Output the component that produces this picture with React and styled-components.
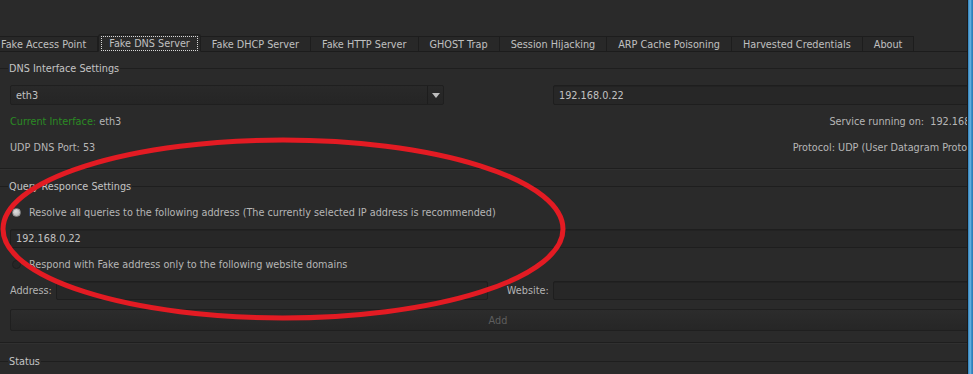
import React from "react";
import styled, { createGlobalStyle } from "styled-components";

const GlobalStyle = createGlobalStyle`
  html, body { margin: 0; padding: 0; background: #2a2a2a; }
  body { font-family: "DejaVu Sans", "Liberation Sans", sans-serif; }
  * { box-sizing: border-box; }
`;

const Screen = styled.div`
  position: relative;
  width: 973px;
  height: 374px;
  display: flex;
  overflow: hidden;
  background: #2a2a2a;
  font-family: "DejaVu Sans", "Liberation Sans", sans-serif;
  font-size: 9.7px;
  color: #b6b6b6;
`;

const Viewport = styled.div`
  width: 967px;
  flex: none;
  overflow: hidden;
`;

const Window = styled.div`
  width: 995px;
  padding-top: 34px;
`;

const TabBar = styled.div`
  display: flex;
  align-items: flex-end;
  height: 18px;
  margin-left: -10px;
  border-bottom: 1px solid #1c1c1c;
`;

const Tab = styled.div`
  flex: none;
  height: ${(p) => (p.$active ? "18px" : "16px")};
  margin-bottom: -1px;
  padding: 0 ${(p) => (p.$active ? "2px" : "11px")};
  display: flex;
  align-items: center;
  justify-content: center;
  background: ${(p) => (p.$active ? "#2a2a2a" : "#282828")};
  border: 1px solid #1d1d1d;
  border-bottom-color: ${(p) => (p.$active ? "#2a2a2a" : "#1c1c1c")};
  border-left-width: ${(p) => (p.$active ? "1px" : "0")};
  border-radius: ${(p) => (p.$active ? "3px 3px 0 0" : "0")};
  color: #c0c0c0;
  white-space: nowrap;
`;

const FocusLabel = styled.span`
  padding: 1px 7px;
  border: 1px dotted #d8d8d8;
  line-height: 11px;
`;

const Pane = styled.div`
  padding-top: 10px;
`;

const Group = styled.section`
  border-bottom: 1px solid #1e1e1e;
  box-shadow: 0 1px 0 #303030;
  padding-bottom: ${(p) => p.$pb || 0}px;
  margin-bottom: ${(p) => p.$mb || 0}px;
`;

const GroupTitle = styled.div`
  display: flex;
  align-items: center;
  height: 12px;
  color: #c4c4c4;
  white-space: nowrap;
  margin-bottom: ${(p) => p.$mb || 0}px;
  &::before {
    content: "";
    width: 8px;
    margin-right: 1px;
    border-top: 1px solid #1e1e1e;
  }
  &::after {
    content: "";
    flex: 1;
    margin-left: 1px;
    border-top: 1px solid #1e1e1e;
  }
`;

const Row = styled.div`
  display: flex;
  align-items: center;
  height: 26px;
  padding-left: ${(p) => (p.$indent ? 29 : 10)}px;
  white-space: nowrap;
`;

const SplitRow = styled(Row)`
  justify-content: space-between;
`;

const InfoText = styled.span`
  margin-right: ${(p) => p.$mr || 0}px;
`;

const Combo = styled.div`
  width: 434px;
  height: 20px;
  display: flex;
  align-items: stretch;
  background: linear-gradient(#292929, #252525);
  border: 1px solid #1f1f1f;
  border-radius: 2px;
  margin-right: 109px;
`;

const ComboText = styled.div`
  flex: 1;
  display: flex;
  align-items: center;
  padding-left: 5px;
  color: #c2c2c2;
`;

const ComboArrow = styled.div`
  width: 16px;
  border-left: 1px solid #1d1d1d;
  display: flex;
  align-items: center;
  justify-content: center;
  &::after {
    content: "";
    border-left: 4px solid transparent;
    border-right: 4px solid transparent;
    border-top: 5px solid #bdbdbd;
  }
`;

const Field = styled.div`
  flex: ${(p) => (p.$w ? "none" : "1")};
  width: ${(p) => (p.$w ? `${p.$w}px` : "auto")};
  height: ${(p) => p.$h || 19}px;
  display: flex;
  align-items: center;
  padding-left: 5px;
  background: #272727;
  border: 1px solid #1e1e1e;
  border-radius: 2px;
  box-shadow: inset 0 1px 0 #222;
  color: #c2c2c2;
  margin-right: ${(p) => p.$mr || 0}px;
`;

const FieldRow = styled.div`
  display: flex;
  align-items: center;
  height: 26px;
  padding-left: 10px;
`;

const Label = styled.span`
  color: #b4b4b4;
  margin-right: 4px;
`;

const Green = styled.span`
  color: #2b8a24;
`;

const Radio = styled.span`
  flex: none;
  width: 9px;
  height: 9px;
  border-radius: 50%;
  margin-left: -17px;
  margin-right: 8px;
  background: ${(p) => (p.$checked ? "radial-gradient(circle at 40% 35%, #e0e0e0, #a8a8a8)" : "#262626")};
  border: 1px solid ${(p) => (p.$checked ? "#8a8a8a" : "#1e1e1e")};
`;

const AddButton = styled.div`
  margin: 6px 0 11px 10px;
  height: 22px;
  display: flex;
  align-items: center;
  justify-content: center;
  width: 976px;
  background: linear-gradient(#2c2c2c, #262626);
  border: 1px solid #1f1f1f;
  border-radius: 2px;
  color: #5e5e5e;
`;

const StatusTitle = styled(GroupTitle)`
  margin-top: 12px;
`;

const WindowEdge = styled.div`
  flex: 1;
  border-left: 1px solid #1a1a1a;
  background: linear-gradient(90deg, #2f7fb8, #6cb6e4 45%, #3d8fc8 70%, #2a78b0);
`;

const Annotation = styled.svg`
  position: absolute;
  left: 0;
  top: 0;
  pointer-events: none;
`;

const tabs = [
  "Fake Access Point",
  "Fake DNS Server",
  "Fake DHCP Server",
  "Fake HTTP Server",
  "GHOST Trap",
  "Session Hijacking",
  "ARP Cache Poisoning",
  "Harvested Credentials",
  "About",
];

export default function App() {
  return (
    <>
      <GlobalStyle />
      <Screen>
        <Viewport>
          <Window>
            <TabBar>
              {tabs.map((t) =>
                t === "Fake DNS Server" ? (
                  <Tab key={t} $active>
                    <FocusLabel>{t}</FocusLabel>
                  </Tab>
                ) : (
                  <Tab key={t}>{t}</Tab>
                )
              )}
            </TabBar>
            <Pane>
              <Group $pb={8} $mb={11}>
                <GroupTitle $mb={8}>DNS Interface Settings</GroupTitle>
                <FieldRow>
                  <Combo>
                    <ComboText>eth3</ComboText>
                    <ComboArrow />
                  </Combo>
                  <Field $h={20}>192.168.0.22</Field>
                </FieldRow>
                <SplitRow>
                  <InfoText>
                    <Green>Current Interface: </Green>eth3
                  </InfoText>
                  <InfoText>Service running on:&nbsp; 192.168.0.22</InfoText>
                </SplitRow>
                <SplitRow>
                  <InfoText>UDP DNS Port: 53</InfoText>
                  <InfoText $mr={10}>Protocol: UDP (User Datagram Protocol)</InfoText>
                </SplitRow>
              </Group>
              <Group>
                <GroupTitle $mb={7}>Query Responce Settings</GroupTitle>
                <Row $indent>
                  <Radio $checked />
                  Resolve all queries to the following address (The currently selected IP address is recommended)
                </Row>
                <FieldRow>
                  <Field>192.168.0.22</Field>
                </FieldRow>
                <Row $indent>
                  <Radio />
                  Respond with Fake address only to the following website domains
                </Row>
                <FieldRow>
                  <Label>Address:</Label>
                  <Field $w={432} $mr={19} />
                  <Label>Website:</Label>
                  <Field />
                </FieldRow>
                <AddButton>Add</AddButton>
              </Group>
              <StatusTitle>Status</StatusTitle>
            </Pane>
          </Window>
        </Viewport>
        <WindowEdge />
        <Annotation width="973" height="374" viewBox="0 0 973 374">
          <ellipse cx="283" cy="229" rx="280" ry="89" fill="none" stroke="#e31b23" strokeWidth="5" />
        </Annotation>
      </Screen>
    </>
  );
}
